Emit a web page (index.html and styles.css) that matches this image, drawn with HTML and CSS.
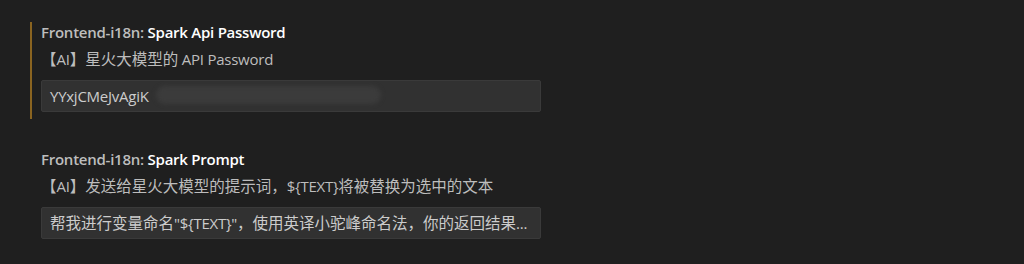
FILE: index.html
```html
<!DOCTYPE HTML>
<html>
<head>
<meta charset="UTF-8">
<title>Settings</title>
<link rel="stylesheet" href="styles.css">
</head>
<body>

<div class="settings-list">
	<div class="setting-item focused">
		<div class="setting-title"><span class="category">Frontend-i18n: </span><span class="label">Spark Api Password</span></div>
		<div class="setting-desc"><span class="zh">【</span>AI<span class="zh">】星火大模型的</span> API Password</div>
		<div class="setting-input"><span class="value">YYxjCMeJvAgiK</span><span class="smudge"></span></div>
	</div>
	<div class="setting-item">
		<div class="setting-title"><span class="category">Frontend-i18n: </span><span class="label">Spark Prompt</span></div>
		<div class="setting-desc"><span class="zh">【</span>AI<span class="zh">】发送给星火大模型的提示词，</span>${TEXT}<span class="zh">将被替换为选中的文本</span></div>
		<div class="setting-input"><span class="value"><span class="zh">帮我进行变量命名</span>"${TEXT}"<span class="zh">，使用英译小驼峰命名法，你的返回结果</span>...</span></div>
	</div>
</div>

</body>
</html>
```

FILE: styles.css
```css
/* *** Page *** */
body {
	margin: 0;
	background-color: #1f1f1f;
	color: #cccccc;
	font-family: "Open Sans", "Noto Sans CJK SC", sans-serif;
	font-size: 15px;
	letter-spacing: -0.25px;
	overflow: hidden;
}

.zh {
	font-family: "Noto Sans CJK SC", sans-serif;
	font-size: 15.5px;
	letter-spacing: 0;
	line-height: 1;
}

.settings-list {
	padding: 22px 0 0 30px;
}

/* *** Setting item *** */
.setting-item {
	width: 500px;
	padding: 0 0 0 9px;
	border-left: 2px solid transparent;
	margin-bottom: 32px;
}

.setting-item.focused {
	border-left-color: #8a6420;
	padding-bottom: 7px;
	margin-bottom: 30px;
}

.setting-title {
	font-weight: 600;
	line-height: 20px;
}

.category {
	color: #bdbdbd;
}

.label {
	color: #ffffff;
}

.setting-desc {
	margin-top: 7px;
	line-height: 20px;
	color: #bdbdbd;
}

/* *** Input *** */
.setting-input {
	position: relative;
	margin-top: 11px;
	height: 30px;
	line-height: 30px;
	padding: 0 8px;
	background-color: #313131;
	border: 1px solid #3a3a3a;
	border-radius: 2px;
	color: #cccccc;
	white-space: nowrap;
	overflow: hidden;
}

.smudge {
	position: absolute;
	left: 114px;
	top: 5px;
	width: 225px;
	height: 18px;
	background-color: #3b3b3b;
	border-radius: 9px;
	filter: blur(2px);
}
```
